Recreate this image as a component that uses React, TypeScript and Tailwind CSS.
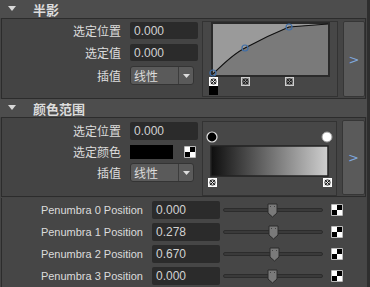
import React from 'react';

const CJK = "font-['Noto_Sans_CJK_SC','Noto_Sans',sans-serif]";
const LAT = "font-['Liberation_Sans','Noto_Sans_CJK_SC',sans-serif]";

function SectionHeader({ title }: { title: string }) {
  return (
    <div className="flex h-[18px] items-center bg-[#4d4d4d]">
      <svg width="9" height="6" viewBox="0 0 9 6" className="ml-[8px]">
        <path d="M0 0 H8 L4 5 Z" fill="#d8d8d8" />
      </svg>
      <span className={`ml-[16px] text-[13px] font-bold leading-none text-[#dcdcdc] ${CJK}`}>{title}</span>
    </div>
  );
}

function NumField({ value, w = 'w-[68px]', h = 'h-[17px]' }: { value: string; w?: string; h?: string }) {
  return (
    <div className={`${w} ${h} flex items-center rounded-[2px] bg-[#2b2b2b] pl-[4px] text-[12px] leading-none text-[#d2d2d2] ${LAT}`}>
      {value}
    </div>
  );
}

function Dropdown({ value }: { value: string }) {
  return (
    <div className="flex h-[19px] w-[64px] items-center rounded-[3px] border border-[#343434] bg-[#5a5a5a]">
      <span className={`flex-1 pl-[3px] text-[12px] leading-none text-[#dcdcdc] ${CJK}`}>{value}</span>
      <div className="flex h-full w-[15px] items-center justify-center border-l border-[#3c3c3c]">
        <svg width="7" height="4" viewBox="0 0 7 4">
          <path d="M0 0 H7 L3.5 4 Z" fill="#dcdcdc" />
        </svg>
      </div>
    </div>
  );
}

function Label({ text, w = 'w-[119px]', font = CJK, size = 'text-[12px]' }: { text: string; w?: string; font?: string; size?: string }) {
  return <div className={`${w} ${size} text-right leading-none text-[#dcdcdc] ${font}`}>{text}</div>;
}

function Checker({ size = 12 }: { size?: number }) {
  const h = size / 2;
  return (
    <svg width={size} height={size} viewBox={`0 0 ${size} ${size}`}>
      <rect x="0" y="0" width={size} height={size} fill="#ffffff" stroke="#777" strokeWidth="1" />
      <rect x={h} y="1" width={h - 1} height={h - 1} fill="#000" />
      <rect x="1" y={h} width={h - 1} height={h - 1} fill="#000" />
    </svg>
  );
}

function Marker({ x, y, active = false }: { x: number; y: number; active?: boolean }) {
  return (
    <g transform={`translate(${x - 4},${y - 4})`}>
      <rect x="0.5" y="0.5" width="8" height="8" fill={active ? '#e8e8e8' : '#8a8a8a'} stroke={active ? '#ffffff' : '#cfcfcf'} />
      <circle cx="4.5" cy="4.5" r="2.6" fill="none" stroke="#1a1a1a" strokeWidth="0.9" />
      <path d="M2 2 L7 7 M7 2 L2 7" stroke="#1a1a1a" strokeWidth="1" />
    </g>
  );
}

function SideButton() {
  return (
    <div className="ml-[5px] mt-[2px] mb-[1px] flex w-[23px] items-center justify-center rounded-[2px] border border-[#363636] bg-[#5a5a5a]">
      <span className="text-[13px] leading-none text-[#7ea6dc] font-['DejaVu_Sans',sans-serif]">&gt;</span>
    </div>
  );
}

// 半影カーブ
function CurvePanel() {
  return (
    <div className="mt-[2px] h-[76px] w-[136px] border border-[#333333] bg-[#474747]">
      <svg width="134" height="74" viewBox="0 0 134 74">
        <rect x="9" y="1" width="117" height="53" fill="#3a3a3a" stroke="#2a2a2a" strokeWidth="2" />
        <path d="M10 52 Q30 32 42 26 Q64 14 86 5 L125 2 L125 2 L10 2 Z" fill="#9a9a9a" />
        <path d="M10 52 Q30 32 42 26 Q64 14 86 5 L125 2 L125 53 L10 53 Z" fill="#7a7a7a" />
        <path d="M10 52 Q30 32 42 26 Q64 14 86 5 L125 2" fill="none" stroke="#111" strokeWidth="1.2" />
        <circle cx="10" cy="51" r="3" fill="none" stroke="#3f6ea8" strokeWidth="1.2" />
        <circle cx="42" cy="26" r="3" fill="none" stroke="#3f6ea8" strokeWidth="1.2" />
        <circle cx="86" cy="5" r="3" fill="none" stroke="#3f6ea8" strokeWidth="1.2" />
        <Marker x={10} y={59} active />
        <rect x="6" y="64" width="9" height="9" fill="#000" />
        <Marker x={42} y={59} />
        <Marker x={86} y={59} />
      </svg>
    </div>
  );
}

// 颜色グラデーション
function GradientPanel() {
  return (
    <div className="mt-[3px] h-[75px] w-[135px] border border-[#333333] bg-[#474747]">
      <svg width="133" height="73" viewBox="0 0 133 73">
        <defs>
          <linearGradient id="g" x1="0" x2="1" y1="0" y2="0">
            <stop offset="0" stopColor="#0e0e0e" />
            <stop offset="1" stopColor="#cfcfcf" />
          </linearGradient>
        </defs>
        <circle cx="9" cy="15" r="5" fill="#000" stroke="#e0e0e0" strokeWidth="1.2" />
        <circle cx="124" cy="15" r="5" fill="#fff" stroke="#9a9a9a" strokeWidth="1" />
        <rect x="8" y="24" width="117" height="30" fill="url(#g)" stroke="#222" strokeWidth="1.5" />
        <Marker x={9} y={60} active />
        <Marker x={124} y={60} active />
      </svg>
    </div>
  );
}

function SliderRow({ label, value, pos }: { label: string; value: string; pos: number }) {
  return (
    <div className="flex h-[18px] items-center">
      <Label text={label} w="w-[141px]" font={LAT} size="text-[11px]" />
      <div className="ml-[9px]">
        <NumField value={value} h="h-[18px]" />
      </div>
      <div className="relative ml-[3px] h-[14px] w-[100px]">
        <div className="absolute left-0 right-0 top-[5px] h-[4px] rounded-full border border-[#2c2c2c] bg-[#3a3a3a]" />
        <svg width="11" height="15" viewBox="0 0 11 15" className="absolute top-[0px]" style={{ left: pos }}>
          <path d="M1 1 H10 V10 L5.5 14 L1 10 Z" fill="#7a7a7a" stroke="#2a2a2a" strokeWidth="1" />
          <path d="M3 3 L4 4 M8 3 L7 4" stroke="#444" strokeWidth="1" />
        </svg>
      </div>
      <div className="ml-[8px] flex">
        <Checker />
      </div>
    </div>
  );
}

export default function App() {
  return (
    <div className="h-[287px] w-[370px] overflow-hidden border-r-[3px] border-[#2e2e2e] bg-[#454545]">
      <SectionHeader title="半影" />
      <div className="mx-[1px] flex h-[81px] border border-[#2c2c2c] bg-[#444444]">
        <div className="flex w-[196px] flex-col gap-[5px] pt-[3px]">
          <div className="flex items-center">
            <Label text="选定位置" />
            <div className="ml-[9px]"><NumField value="0.000" /></div>
          </div>
          <div className="flex items-center">
            <Label text="选定值" />
            <div className="ml-[9px]"><NumField value="0.000" /></div>
          </div>
          <div className="flex items-center">
            <Label text="插值" />
            <div className="ml-[9px]"><Dropdown value="线性" /></div>
          </div>
        </div>
        <div className="ml-[4px]"><CurvePanel /></div>
        <SideButton />
      </div>
      <SectionHeader title="颜色范围" />
      <div className="mx-[1px] flex h-[80px] border border-[#2c2c2c] bg-[#444444]">
        <div className="flex w-[196px] flex-col pt-[4px]">
          <div className="flex items-center">
            <Label text="选定位置" />
            <div className="ml-[9px]"><NumField value="0.000" h="h-[18px]" /></div>
          </div>
          <div className="mt-[5px] flex h-[14px] items-center">
            <Label text="选定颜色" />
            <div className="ml-[9px] h-[14px] w-[43px] bg-[#000000]" />
            <div className="ml-[11px] flex"><Checker /></div>
          </div>
          <div className="mt-[4px] flex items-center">
            <Label text="插值" />
            <div className="ml-[9px]"><Dropdown value="线性" /></div>
          </div>
        </div>
        <div className="ml-[4px]"><GradientPanel /></div>
        <SideButton />
      </div>
      <div className="mx-[1px] mt-[1px] flex h-[90px] flex-col gap-[4px] border-l border-[#2c2c2c] bg-[#464646] pt-[3px]">
        <SliderRow label="Penumbra 0 Position" value="0.000" pos={44} />
        <SliderRow label="Penumbra 1 Position" value="0.278" pos={45} />
        <SliderRow label="Penumbra 2 Position" value="0.670" pos={46} />
        <SliderRow label="Penumbra 3 Position" value="0.000" pos={44} />
      </div>
    </div>
  );
}
